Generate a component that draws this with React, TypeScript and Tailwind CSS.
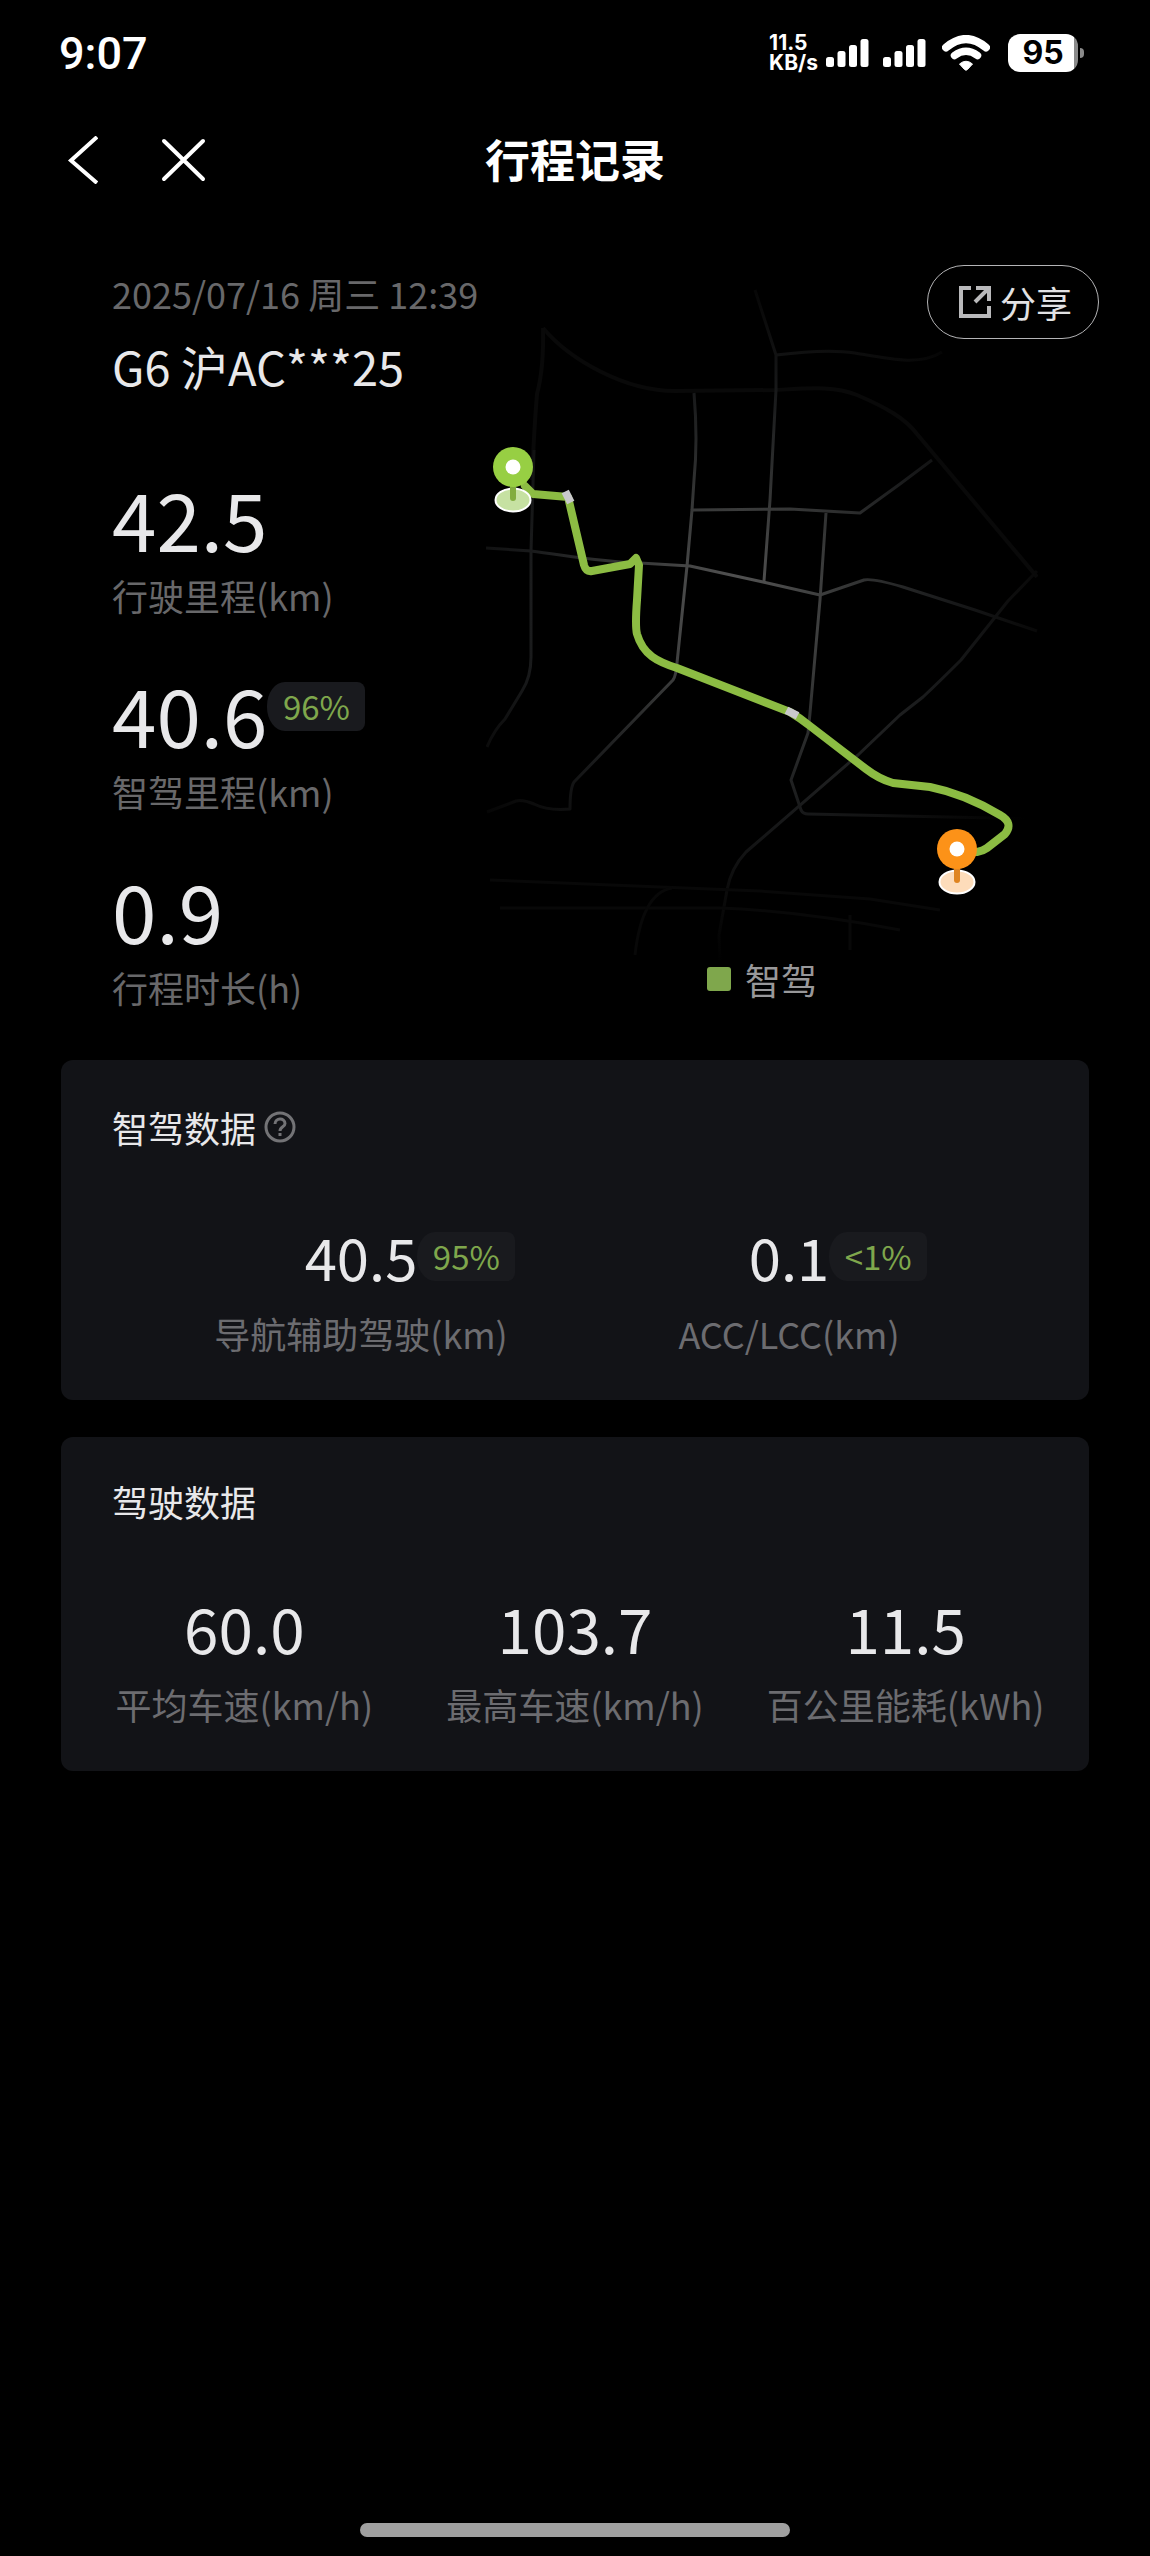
import React from 'react'

interface StatProps {
  value: string
  label: string
  badge?: string
}

const batteryLevel = 95

const SignalBars = () => (
  <svg className="h-7 w-[43px]" viewBox="0 0 43 28" fill="#fff" aria-hidden="true">
    <rect x="0" y="18" width="8" height="10" rx="2.5" />
    <rect x="11.5" y="12" width="8" height="16" rx="2.5" />
    <rect x="23" y="6" width="8" height="22" rx="2.5" />
    <rect x="34.5" y="0" width="8" height="28" rx="2.5" />
  </svg>
)

const WifiIcon = () => (
  <svg className="h-9 w-12" viewBox="0 0 48 36" aria-hidden="true">
    <path d="M4 12.500Q24 -4.500 44 12.500" fill="none" stroke="#fff" strokeWidth="8" strokeLinecap="round" />
    <path d="M12.500 20.500Q24 12 35.500 20.500" fill="none" stroke="#fff" strokeWidth="7.500" strokeLinecap="round" />
    <path d="M17.500 29Q24 23.500 30.500 29L25.500 34.500Q24 36 22.500 34.500Z" fill="#fff" stroke="#fff" strokeLinejoin="round" />
  </svg>
)

const Battery = () => (
  <div className="flex items-center gap-0.5">
    <div className="flex h-[38px] w-[70px] items-center justify-center rounded-xl bg-[linear-gradient(to_right,#fff_95%,#8a8a8a_95%)] font-['Inter',sans-serif] text-[32px] leading-none font-bold text-black">
      {batteryLevel}
    </div>
    <div className="h-2.5 w-1 rounded-r-full bg-[#8a8a8a]" />
  </div>
)

const StatusBar = () => (
  <div className="flex h-[106px] items-center justify-between pr-[66px] pl-[59px] text-white">
    <div className="font-['Roboto',sans-serif] text-[45px] leading-none font-medium">9:07</div>
    <div className="flex items-center">
      <div className="font-['Inter',sans-serif] text-[21px] leading-5 font-bold">
        <div>11.5</div>
        <div>KB/s</div>
      </div>
      <div className="ml-2 flex gap-3.5">
        <SignalBars />
        <SignalBars />
      </div>
      <div className="mr-[18px] ml-4">
        <WifiIcon />
      </div>
      <Battery />
    </div>
  </div>
)

const NavBar = () => (
  <header className="grid h-[108px] grid-cols-3 items-center px-[66px] text-white">
    <div className="flex items-center gap-[62px]">
      <button aria-label="返回">
        <svg className="h-12 w-8" viewBox="0 0 32 48" fill="none" stroke="#fff" strokeWidth="4">
          <path d="M31 1L5 24.500L31 47" />
        </svg>
      </button>
      <button aria-label="关闭">
        <svg className="h-12 w-12" viewBox="0 0 48 48" fill="none" stroke="#fff" strokeWidth="4" strokeLinecap="round">
          <path d="M4 5L43 43M43 5L4 43" />
        </svg>
      </button>
    </div>
    <h1 className="pb-1 text-center text-[45px] leading-none font-bold">行程记录</h1>
  </header>
)

const Badge: React.FC<{ text: string }> = ({ text }) => (
  <span className="flex h-[49px] w-[98px] items-center justify-center rounded-tl-[18px_24px] rounded-r-lg rounded-bl-[18px_24px] bg-[#191a1e] text-[33px] leading-none text-[#7fa74c]">
    {text}
  </span>
)

const SummaryStat: React.FC<StatProps> = ({ value, label, badge }) => (
  <div>
    <div className="relative w-fit text-[80px] leading-24 text-[#e8e8ea]">
      {value}
      {badge && (
        <div className="absolute top-[17px] left-full">
          <Badge text={badge} />
        </div>
      )}
    </div>
    <div className="text-[36px] leading-15 text-[#68686a]">{label}</div>
  </div>
)

const CardStat: React.FC<StatProps> = ({ value, label, badge }) => (
  <div className="flex flex-1 flex-col items-center gap-3.5">
    <div className={badge ? 'relative text-[58px] leading-18' : 'text-[62px] leading-18'}>
      {value}
      {badge && (
        <div className="absolute top-3 left-full">
          <Badge text={badge} />
        </div>
      )}
    </div>
    <div className="text-[36px] leading-[54px] whitespace-nowrap text-[#6c6c70]">{label}</div>
  </div>
)

const MapPin: React.FC<{ x: number; y: number; head: string; stem: string; base: string }> = ({ x, y, head, stem, base }) => (
  <g transform={`translate(${x} ${y})`}>
    <ellipse cy="33" rx="17.500" ry="11.500" fill={base} stroke="#fff" strokeWidth="2" />
    <path d="M0 16V31" stroke={stem} strokeWidth="6" strokeLinecap="round" />
    <circle r="20" fill={head} />
    <circle r="7.500" fill="#fff" />
  </g>
)

const TripMap = () => (
  <svg className="w-full" viewBox="486 270 552 691" fill="none" role="img" aria-label="行程轨迹">
    <defs>
      <radialGradient id="roads" gradientUnits="userSpaceOnUse" cx="735" cy="605" r="360">
        <stop offset="0" stopColor="#585858" />
        <stop offset="0.3" stopColor="#363737" />
        <stop offset="0.6" stopColor="#18191a" />
        <stop offset="0.8" stopColor="#0b0b0b" />
        <stop offset="1" stopColor="#000" />
      </radialGradient>
    </defs>
    {/* outer ring */}
    <g stroke="#090909" strokeWidth="4" strokeLinejoin="round">
      <path d="M543 328C570 360 625 391 675 391L776 390C812 388 835 386 857 395C885 407 905 418 917 434L1037 577" />
      <path d="M543 328Q544 368 537 394Q534 430 532 480" />
    </g>
    {/* streets */}
    <g stroke="url(#roads)" strokeWidth="3" strokeLinejoin="round">
      <path d="M534 450L531 551V657Q531 677 522 691L505 719Q494 730 487 747" />
      <path d="M755 290L776 355V390L770 500L764 581" />
      <path d="M776 355C800 352 830 349 855 353C890 359 920 366 942 352" />
      <path d="M694 393Q698 440 694 480L692 510L687 566L677 663Q676 676 673 680L574 782Q570 788 570 809Q548 811 534 804Q522 799 516 801L487 812" />
      <path d="M693 510L790 509L860 513L900 484L932 460" />
      <path d="M486 548L531 551C570 556 600 562 640 563L690 566L763 582L820 595L864 580Q872 578 903 587L975 610L1037 631" />
      <path d="M826 513L820 600L810 713L808 733L791 780L801 810Q803 814 808 814L1037 819" />
      <path d="M1037 571L1008 601L961 660Q940 681 923 697L900 715L858 755L746 852Q731 868 727 890L719 935L720 960" />
    </g>
    <g stroke="#080808" strokeWidth="3">
      <path d="M490 880L660 887L760 891L870 899L940 910" />
      <path d="M500 908H720Q800 911 900 930" />
      <path d="M635 955Q642 893 672 888M850 915V950" />
    </g>
    <g stroke="#8cbc43" strokeWidth="8" strokeLinecap="round" strokeLinejoin="round">
      <path d="M525 486L533 494L568 497L584 565Q586 572 592 571L630 564L636 558L639 565L637 600Q635 626 637 634C643 655 658 662 677 668L790 712Q800 718 810 726L866 769Q879 779 893 783L930 787Q965 794 1000 815Q1014 823 1005 834L987 848Q983 851 977 852" />
      <path d="M567 495L569 499M790 712L794 714" stroke="#c9c9cb" strokeLinecap="square" />
    </g>
    <MapPin x={513} y={467} head="#97cf43" stem="#82ad3e" base="#c6e1a2" />
    <MapPin x={957} y={849} head="#fc9218" stem="#df8420" base="#fddcba" />
  </svg>
)

const ShareButton = () => (
  <button className="flex h-[74px] w-[172px] items-center gap-2 rounded-full border border-[#b4b4b6] pl-[30px] text-[36px] leading-none text-[#e2e2e4]">
    <svg className="h-[34px] w-[34px]" viewBox="0 0 34 34" fill="none" stroke="#b9b9bb" strokeWidth="4">
      <path d="M13 3H3V31H31V21M18 3H31V16M30 4L17 17" />
    </svg>
    分享
  </button>
)

const Overview = () => (
  <section className="flex pt-[49px] pr-[51px] pl-28">
    <div className="w-[374px] shrink-0 whitespace-nowrap">
      <div className="text-[36px] leading-15 text-[#68686a]">2025/07/16 周三 12:39</div>
      <div className="mt-[13px] text-[47px] leading-15 text-[#e8e8ea]">G6 沪AC***25</div>
      <div className="mt-[73px] flex flex-col gap-10">
        <SummaryStat value="42.5" label="行驶里程(km)" />
        <SummaryStat value="40.6" label="智驾里程(km)" badge="96%" />
        <SummaryStat value="0.9" label="行程时长(h)" />
      </div>
    </div>
    <div className="relative flex-1">
      <div className="pt-[7px] pr-[61px]">
        <TripMap />
      </div>
      <div className="absolute top-0.5 right-0">
        <ShareButton />
      </div>
      <div className="flex items-center justify-center gap-3.5 pr-[61px] text-[36px] leading-none text-[#98989a]">
        <span className="h-6 w-6 rounded-[3px] bg-[#7fa74c]" />
        智驾
      </div>
    </div>
  </section>
)

export default function App() {
  return (
    <div className="flex min-h-screen flex-col bg-black font-['Noto_Sans_CJK_SC',sans-serif]">
      <StatusBar />
      <NavBar />
      <main className="text-[#e8e8ea]">
        <Overview />
        <div className="mt-[43px] flex flex-col gap-[37px] px-[61px]">
          <section className="rounded-xl bg-[#121317] py-10">
            <div className="flex items-center gap-2 pl-[51px]">
              <h2 className="text-[36px] leading-[54px]">智驾数据</h2>
              <button aria-label="智驾数据说明">
                <svg className="h-8 w-8" viewBox="0 0 32 32" fill="none" stroke="#737376" strokeWidth="3">
                  <circle cx="16" cy="16" r="14" />
                  <path d="M11 13C11 6.500 21 6.500 21 12.500C21 16 16 15.500 16 20" />
                  <path d="M16 22V25" />
                </svg>
              </button>
            </div>
            <div className="mt-[66px] flex px-[86px]">
              <CardStat value="40.5" label="导航辅助驾驶(km)" badge="95%" />
              <CardStat value="0.1" label="ACC/LCC(km)" badge="<1%" />
            </div>
          </section>
          <section className="rounded-xl bg-[#121317] pt-[37px] pb-10">
            <h2 className="pl-[51px] text-[36px] leading-[54px]">驾驶数据</h2>
            <div className="mt-[63px] flex px-[18px]">
              <CardStat value="60.0" label="平均车速(km/h)" />
              <CardStat value="103.7" label="最高车速(km/h)" />
              <CardStat value="11.5" label="百公里能耗(kWh)" />
            </div>
          </section>
        </div>
      </main>
      <div className="mt-auto flex justify-center pb-[19px]">
        <div className="h-3.5 w-[430px] rounded-full bg-[#a0a0a0]" />
      </div>
    </div>
  )
}
